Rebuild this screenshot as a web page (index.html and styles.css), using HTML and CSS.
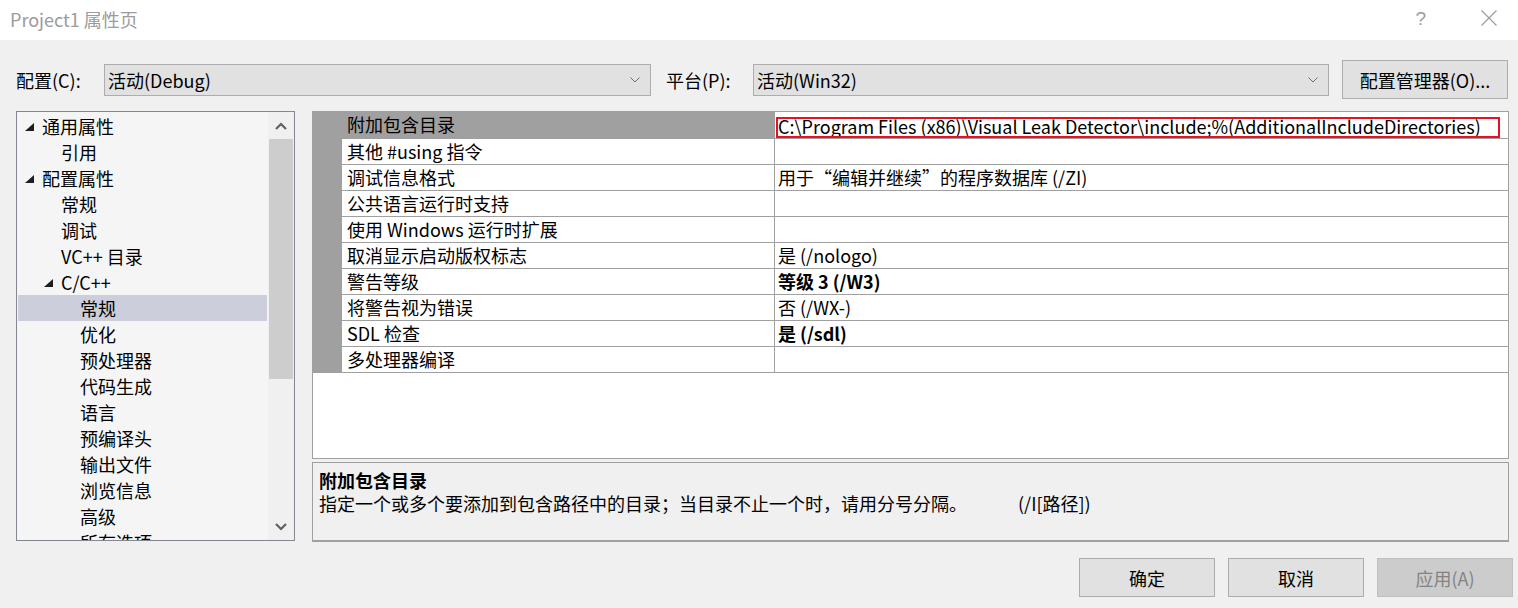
FILE: index.html
```html
<!DOCTYPE html>
<html lang="zh-CN">
<head>
<meta charset="utf-8">
<title>Project1 属性页</title>
<link rel="stylesheet" href="styles.css">
</head>
<body>
<div class="window">
  <div class="titlebar">
    <span class="title">Project1 属性页</span>
    <span class="help">?</span>
    <span class="close">
      <svg width="16" height="16" viewBox="0 0 16 16"><path d="M0.5 0.5L15.5 15.5M15.5 0.5L0.5 15.5" stroke="#9a9a9a" stroke-width="1.1" fill="none"/></svg>
    </span>
  </div>

  <div class="toolbar">
    <span class="label label-cfg">配置(C):</span>
    <div class="combo combo-cfg">
      <span class="combo-text">活动(Debug)</span>
      <svg class="combo-arrow" width="10" height="6" viewBox="0 0 10 6"><path d="M0.5 0.5L5 5L9.5 0.5" stroke="#6f6f6f" stroke-width="1" fill="none"/></svg>
    </div>
    <span class="label label-plat">平台(P):</span>
    <div class="combo combo-plat">
      <span class="combo-text">活动(Win32)</span>
      <svg class="combo-arrow" width="10" height="6" viewBox="0 0 10 6"><path d="M0.5 0.5L5 5L9.5 0.5" stroke="#6f6f6f" stroke-width="1" fill="none"/></svg>
    </div>
    <button class="btn btn-mgr">配置管理器(O)...</button>
  </div>

  <div class="main">
    <div class="tree">
      <div class="tree-list">
        <div class="node lvl0"><span class="tw"><svg width="9" height="8" viewBox="0 0 9 8"><polygon points="9,0 9,8 0,8" fill="#1e1e1e"/></svg></span><span>通用属性</span></div>
        <div class="node lvl1"><span class="tw"></span><span>引用</span></div>
        <div class="node lvl0"><span class="tw"><svg width="9" height="8" viewBox="0 0 9 8"><polygon points="9,0 9,8 0,8" fill="#1e1e1e"/></svg></span><span>配置属性</span></div>
        <div class="node lvl1"><span class="tw"></span><span>常规</span></div>
        <div class="node lvl1"><span class="tw"></span><span>调试</span></div>
        <div class="node lvl1"><span class="tw"></span><span>VC++ 目录</span></div>
        <div class="node lvl1"><span class="tw"><svg width="9" height="8" viewBox="0 0 9 8"><polygon points="9,0 9,8 0,8" fill="#1e1e1e"/></svg></span><span>C/C++</span></div>
        <div class="node lvl2 selected"><span class="tw"></span><span>常规</span></div>
        <div class="node lvl2"><span class="tw"></span><span>优化</span></div>
        <div class="node lvl2"><span class="tw"></span><span>预处理器</span></div>
        <div class="node lvl2"><span class="tw"></span><span>代码生成</span></div>
        <div class="node lvl2"><span class="tw"></span><span>语言</span></div>
        <div class="node lvl2"><span class="tw"></span><span>预编译头</span></div>
        <div class="node lvl2"><span class="tw"></span><span>输出文件</span></div>
        <div class="node lvl2"><span class="tw"></span><span>浏览信息</span></div>
        <div class="node lvl2"><span class="tw"></span><span>高级</span></div>
        <div class="node lvl2"><span class="tw"></span><span>所有选项</span></div>
      </div>
      <div class="scrollbar">
        <div class="sb-btn"><svg width="12" height="8" viewBox="0 0 12 8"><path d="M1 7L6 2L11 7" stroke="#606060" stroke-width="2.2" fill="none"/></svg></div>
        <div class="sb-track"><div class="sb-thumb"></div></div>
        <div class="sb-btn"><svg width="12" height="8" viewBox="0 0 12 8"><path d="M1 1L6 6L11 1" stroke="#606060" stroke-width="2.2" fill="none"/></svg></div>
      </div>
    </div>

    <div class="right">
      <div class="grid">
        <div class="prop selected">
          <div class="gutter"></div>
          <div class="pname">附加包含目录</div>
          <div class="pval"><span class="mark"></span>C:\Program Files (x86)\Visual Leak Detector\include;%(AdditionalIncludeDirectories)</div>
        </div>
        <div class="prop"><div class="gutter"></div><div class="pname">其他 #using 指令</div><div class="pval"></div></div>
        <div class="prop"><div class="gutter"></div><div class="pname">调试信息格式</div><div class="pval">用于“编辑并继续”的程序数据库 (/ZI)</div></div>
        <div class="prop"><div class="gutter"></div><div class="pname">公共语言运行时支持</div><div class="pval"></div></div>
        <div class="prop"><div class="gutter"></div><div class="pname">使用 Windows 运行时扩展</div><div class="pval"></div></div>
        <div class="prop"><div class="gutter"></div><div class="pname">取消显示启动版权标志</div><div class="pval">是 (/nologo)</div></div>
        <div class="prop"><div class="gutter"></div><div class="pname">警告等级</div><div class="pval bold">等级 3 (/W3)</div></div>
        <div class="prop"><div class="gutter"></div><div class="pname">将警告视为错误</div><div class="pval">否 (/WX-)</div></div>
        <div class="prop"><div class="gutter"></div><div class="pname">SDL 检查</div><div class="pval bold">是 (/sdl)</div></div>
        <div class="prop"><div class="gutter"></div><div class="pname">多处理器编译</div><div class="pval"></div></div>
      </div>
      <div class="desc">
        <div class="desc-title">附加包含目录</div>
        <div class="desc-text">指定一个或多个要添加到包含路径中的目录；当目录不止一个时，请用分号分隔。<span class="desc-switch">(/I[路径])</span></div>
      </div>
    </div>
  </div>

  <div class="footer">
    <button class="btn btn-foot">确定</button>
    <button class="btn btn-foot">取消</button>
    <button class="btn btn-foot disabled">应用(A)</button>
  </div>
</div>
</body>
</html>
```

FILE: styles.css
```css
* { box-sizing: border-box; }
html, body {
  margin: 0;
  padding: 0;
}
body {
  width: 1518px;
  height: 608px;
  overflow: hidden;
  background: #f0f0f0;
  font-family: "Noto Sans CJK SC", "Noto Sans", sans-serif;
  font-size: 18px;
  color: #000;
}
.window {
  display: flex;
  flex-direction: column;
  width: 1518px;
  height: 608px;
}

/* title bar */
.titlebar {
  height: 40px;
  background: #fff;
  display: flex;
  align-items: center;
  padding-left: 10px;
  flex-shrink: 0;
}
.title {
  color: #9b9b9b;
  font-size: 18px;
  line-height: 24px;
  margin-top: -2px;
}
.help {
  margin-left: auto;
  color: #9b9b9b;
  font-family: "Liberation Sans", sans-serif;
  font-size: 19px;
  margin-top: -3px;
}
.close {
  display: flex;
  margin-left: 55px;
  margin-right: 21px;
  margin-top: -4px;
}

/* toolbar */
.toolbar {
  margin-top: 20px;
  height: 39px;
  display: flex;
  align-items: center;
  padding-left: 16px;
  flex-shrink: 0;
}
.label {
  line-height: 24px;
  white-space: nowrap;
}
.label-cfg { width: 88px; }
.label-plat { width: 87px; margin-left: 15px; }
.combo {
  height: 32px;
  background: #e1e1e1;
  border: 1px solid #adadad;
  display: flex;
  align-items: center;
  padding: 0 10px 0 3px;
}
.combo-cfg { width: 547px; }
.combo-plat { width: 576px; }
.combo-text {
  flex: 1;
  line-height: 24px;
}
.combo-arrow { flex-shrink: 0; }

.btn {
  font-family: inherit;
  font-size: 18px;
  color: #000;
  background: #e1e1e1;
  border: 1px solid #adadad;
  border-radius: 0;
  padding: 0;
  height: 39px;
  line-height: 24px;
}
.btn-mgr {
  width: 166px;
  margin-left: 13px;
}

/* main */
.main {
  margin-top: 12px;
  display: flex;
  padding-left: 16px;
  flex-shrink: 0;
}
.tree {
  width: 279px;
  height: 430px;
  border: 1px solid #828790;
  background: #f5f5f5;
  display: flex;
}
.tree-list {
  flex: 1;
  padding: 1px;
  overflow: hidden;
}
.node {
  height: 26px;
  display: flex;
  align-items: center;
  white-space: nowrap;
  line-height: 24px;
}
.node.lvl0 { padding-left: 5px; }
.node.lvl1 { padding-left: 24px; }
.node.lvl2 { padding-left: 43px; }
.node.selected { background: #cccedb; }
.tw {
  width: 19px;
  flex-shrink: 0;
  display: flex;
  align-items: center;
  padding-left: 2px;
  margin-top: 1px;
}
.scrollbar {
  width: 26px;
  background: #f0f0f0;
  display: flex;
  flex-direction: column;
  flex-shrink: 0;
}
.sb-btn {
  height: 27px;
  display: flex;
  align-items: center;
  justify-content: center;
  flex-shrink: 0;
}
.sb-track {
  flex: 1;
  padding: 0 1px;
}
.sb-thumb {
  height: 240px;
  background: #cdcdcd;
}

/* right panel */
.right {
  width: 1197px;
  margin-left: 17px;
  display: flex;
  flex-direction: column;
}
.grid {
  height: 348px;
  background: #fff;
  border: 1px solid #a0a0a0;
}
.prop {
  height: 26px;
  display: flex;
}
.prop:first-child { height: 27px; }
.gutter {
  width: 29px;
  background: #a0a0a0;
  flex-shrink: 0;
}
.pname {
  width: 433px;
  flex-shrink: 0;
  border-bottom: 1px solid #a0a0a0;
  border-right: 1px solid #a0a0a0;
  padding-left: 5px;
  line-height: 24px;
  white-space: nowrap;
  overflow: hidden;
}
.prop.selected .pname { background: #a0a0a0; }
.pval {
  flex: 1;
  border-bottom: 1px solid #a0a0a0;
  padding-left: 3px;
  line-height: 24px;
  white-space: nowrap;
  overflow: hidden;
  position: relative;
}
.pval.bold { font-weight: bold; }
.mark {
  position: absolute;
  left: 1px;
  top: 5px;
  width: 724px;
  height: 21px;
  border: 2px solid #e81123;
  pointer-events: none;
}
.prop:first-child .pval { padding-top: 2px; }

.desc {
  margin-top: 3px;
  height: 80px;
  border: 1px solid #a0a0a0;
  border-bottom: 2px solid #a0a0a0;
  background: #f0f0f0;
  padding: 6px 0 0 6px;
}
.desc-title {
  font-weight: bold;
  line-height: 23px;
}
.desc-text {
  line-height: 23px;
  white-space: nowrap;
}
.desc-switch { margin-left: 51px; }

/* footer */
.footer {
  margin-top: 16px;
  display: flex;
  justify-content: flex-end;
  padding-right: 5px;
}
.btn-foot {
  width: 136px;
  margin-left: 13px;
}
.btn-foot.disabled {
  background: #cccccc;
  border-color: #bfbfbf;
  color: #838383;
}
```
